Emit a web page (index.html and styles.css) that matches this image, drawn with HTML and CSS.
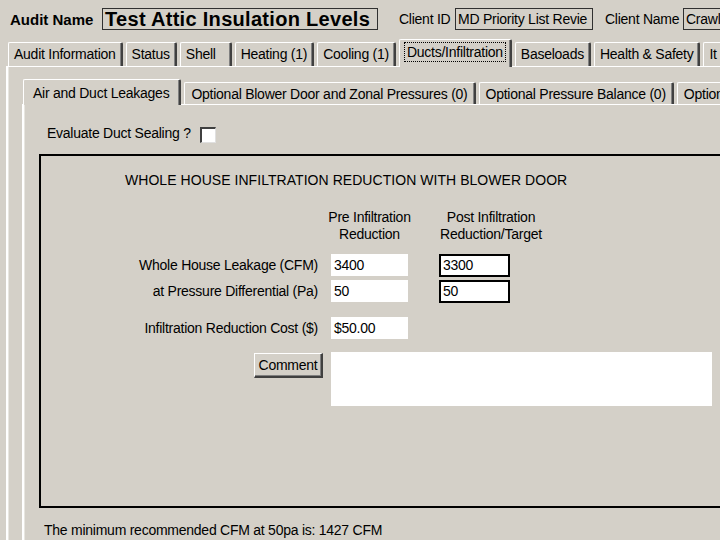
FILE: index.html
```html
<!DOCTYPE html>
<html lang="en">

<head>
  <meta charset="UTF-8">
  <meta name="viewport" content="width=device-width, initial-scale=1.0">
  <link rel="stylesheet" href="styles.css">
</head>

<body>
  <main class="audit">
    <header class="topbar">
      <span class="topbar__label topbar__label--bold">Audit Name</span>
      <div class="field field--name">Test Attic Insulation Levels</div>
      <span class="topbar__label topbar__label--client">Client ID</span>
      <div class="field field--client">MD Priority List Revie</div>
      <span class="topbar__label topbar__label--cname">Client Name</span>
      <div class="field field--cname">Crawl</div>
    </header>

    <nav class="tabs">
      <div class="tab">Audit Information</div>
      <div class="tab">Status</div>
      <div class="tab tab--wide">Shell</div>
      <div class="tab">Heating (1)</div>
      <div class="tab">Cooling (1)</div>
      <div class="tab tab--active"><span class="tab__focus">Ducts/Infiltration</span></div>
      <div class="tab">Baseloads</div>
      <div class="tab">Health &amp; Safety</div>
      <div class="tab">It</div>
    </nav>

    <section class="panel">
      <nav class="tabs tabs--sub">
        <div class="tab tab--active">Air and Duct Leakages</div>
        <div class="tab">Optional Blower Door and Zonal Pressures (0)</div>
        <div class="tab">Optional Pressure Balance (0)</div>
        <div class="tab">Option</div>
      </nav>

      <div class="panel panel--sub">
        <div class="evaluate">
          <span>Evaluate Duct Sealing ?</span>
          <span class="checkbox"></span>
        </div>

        <div class="infiltration">
          <h2 class="infiltration__title">WHOLE HOUSE INFILTRATION REDUCTION WITH BLOWER DOOR</h2>

          <div class="form">
            <div></div>
            <div class="form__head">Pre Infiltration<br>Reduction</div>
            <div class="form__head form__head--post">Post Infiltration<br>Reduction/Target</div>

            <label class="form__label form__label--first">Whole House Leakage (CFM)</label>
            <div class="input input--first">3400</div>
            <div class="input input--post input--first">3300</div>

            <label class="form__label">at Pressure Differential (Pa)</label>
            <div class="input">50</div>
            <div class="input input--post">50</div>

            <label class="form__label form__label--spaced">Infiltration Reduction Cost ($)</label>
            <div class="input input--spaced">$50.00</div>
            <div></div>

            <div class="form__button-cell"><button class="button">Comment</button></div>
            <div class="comment"></div>
          </div>
        </div>

        <p class="note">The minimum recommended CFM at 50pa is: 1427 CFM</p>
      </div>
    </section>
  </main>
</body>

</html>
```

FILE: styles.css
```css
* {
  box-sizing: border-box;
}

html,
body {
  margin: 0;
  width: 720px;
  height: 540px;
  overflow: hidden;
}

body {
  background-color: #d4d0c8;
  font-family: "Liberation Sans", Arial, sans-serif;
  font-size: 14px;
  letter-spacing: -0.25px;
  color: #000;
}

.audit {
  width: 720px;
  white-space: nowrap;
}

/* header row */

.topbar {
  display: flex;
  align-items: center;
  height: 22px;
  margin-top: 8px;
  padding-left: 10px;
}

.topbar__label {
  flex: none;
  font-size: 14px;
}

.topbar__label--bold {
  font-size: 15px;
  font-weight: 700;
  letter-spacing: 0;
  width: 92px;
}

.topbar__label--client {
  margin-left: 21px;
  width: 56px;
}

.topbar__label--cname {
  margin-left: 12px;
  width: 78px;
}

.field {
  height: 22px;
  border: 1px solid #303030;
  padding: 0 3px 0 2px;
  line-height: 20px;
  overflow: hidden;
  flex: none;
}

.field--name {
  width: 276px;
  font-size: 20px;
  font-weight: 700;
  letter-spacing: 0.3px;
}

.field--client {
  width: 138px;
}

.field--cname {
  width: 80px;
}

/* tabs */

.tabs {
  display: flex;
  align-items: flex-end;
  height: 28px;
  margin-top: 8px;
  padding-left: 8px;
  position: relative;
  z-index: 1;
}

.tab {
  flex: none;
  height: 24px;
  padding: 0 5px;
  margin-right: 3px;
  line-height: 22px;
  border-top: 1px solid #fff;
  border-left: 1px solid #fff;
  border-right: 2px solid #404040;
  border-radius: 2px 2px 0 0;
  box-shadow: inset -1px 0 0 #808080;
}

.tab--wide {
  padding-right: 14px;
}

.tab--active {
  height: 28px;
  padding-top: 1px;
  margin-bottom: -1px;
  background-color: #d4d0c8;
}

.tab__focus {
  display: inline-block;
  line-height: 18px;
  padding: 0 2px;
  outline: 1px dotted #000;
}

/* panels */

.panel {
  margin-left: 6px;
  border-top: 1px solid #fff;
  border-left: 2px solid #fff;
  box-shadow: inset 1px 0 0 #e8e6e0;
  padding-top: 11px;
  height: 480px;
}

.tabs--sub {
  margin-top: 0;
  padding-left: 15px;
  height: 26px;
}

.tabs--sub .tab {
  height: 22px;
  padding: 0 6px;
}

.tabs--sub .tab--active {
  height: 26px;
  padding: 2px 10px 0 9px;
}

.panel--sub {
  margin-left: 14px;
  padding-top: 0;
  height: 440px;
}

.evaluate {
  display: flex;
  align-items: center;
  padding-left: 23px;
  margin-top: 19px;
  height: 18px;
}

.checkbox {
  width: 16px;
  height: 16px;
  margin-left: 9px;
  margin-top: 4px;
  background-color: #fff;
  border-top: 2px solid #404040;
  border-left: 2px solid #404040;
  border-right: 1px solid #e0e0e0;
  border-bottom: 1px solid #e0e0e0;
}

/* whole house box */

.infiltration {
  margin-top: 12px;
  margin-left: 15px;
  width: 720px;
  height: 354px;
  border: 2px solid #000;
  padding-top: 15px;
}

.infiltration__title {
  margin: 0 0 0 84px;
  font-size: 14px;
  font-weight: 400;
  letter-spacing: 0.05px;
  line-height: 18px;
}

.form {
  display: grid;
  grid-template-columns: 290px 108px 280px;
  margin-top: 20px;
}

.form__head {
  width: 77px;
  line-height: 17px;
  display: flex;
  flex-direction: column;
  align-items: center;
  text-align: center;
}

.form__head--post {
  width: 110px;
  margin-left: -3px;
}

.form__label {
  text-align: right;
  padding-right: 13px;
  line-height: 22px;
  margin-top: 3px;
}

.form__label--first {
  margin-top: 11px;
}

.form__label--spaced {
  margin-top: 14px;
}

.input {
  background-color: #fff;
  width: 77px;
  height: 22px;
  margin-top: 3px;
  padding: 0 3px;
  line-height: 22px;
}

.input--first {
  margin-top: 11px;
}

.input--spaced {
  margin-top: 14px;
}

.input--post {
  width: 71px;
  height: 23px;
  border: 2px solid #000;
  padding: 0 2px;
  line-height: 19px;
}

.form__button-cell {
  display: flex;
  justify-content: flex-end;
  padding-right: 8px;
  margin-top: 14px;
}

.button {
  font: inherit;
  letter-spacing: inherit;
  height: 25px;
  width: 69px;
  padding: 0;
  background-color: #d4d0c8;
  border-top: 1px solid #fff;
  border-left: 1px solid #fff;
  border-right: 2px solid #404040;
  border-bottom: 2px solid #404040;
  box-shadow: inset -1px -1px 0 #808080;
}

.comment {
  grid-column: 2 / 4;
  margin-top: 13px;
  width: 381px;
  height: 54px;
  background-color: #fff;
}

.note {
  margin: 13px 0 0 20px;
  line-height: 18px;
}
```
